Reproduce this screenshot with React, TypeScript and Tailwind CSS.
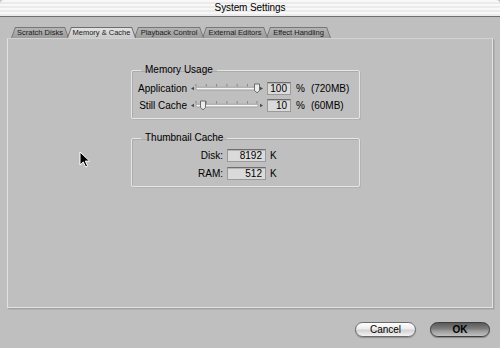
import React from 'react'

const tabs = [
  { label: 'Scratch Disks', w: 'w-[58px]', z: 'z-[1]', active: false },
  { label: 'Memory & Cache', w: 'w-[69px]', z: 'z-[9]', active: true },
  { label: 'Playback Control', w: 'w-[70px]', z: 'z-[5]', active: false },
  { label: 'External Editors', w: 'w-[66px]', z: 'z-[4]', active: false },
  { label: 'Effect Handling', w: 'w-[65px]', z: 'z-[3]', active: false },
]

const ticks = [5, 15.3, 25.6, 35.9, 46.2, 56.5, 66]

function Slider({ pos }: { pos: number }) {
  return (
    <svg width="73" height="13" viewBox="0 0 73 13" className="shrink-0">
      <polygon points="0,6.5 3,4.8 3,8.2" fill="#4a4a4a" />
      {ticks.map((x) => (
        <line key={x} x1={x} y1="2" x2={x} y2="4.6" stroke="#7a7a7a" strokeWidth="0.8" />
      ))}
      <rect x="5" y="5.3" width="62" height="2.6" rx="1.3" fill="#f6f6f6" stroke="#8a8a8a" strokeWidth="0.7" />
      <polygon points="72,6.5 69,4.8 69,8.2" fill="#4a4a4a" />
      <polygon
        points={`${pos - 2.5},2 ${pos + 2.5},2 ${pos + 2.5},8.5 ${pos},10.8 ${pos - 2.5},8.5`}
        fill="#ececec"
        stroke="#505050"
        strokeWidth="0.8"
      />
    </svg>
  )
}

function Field({ value, w }: { value: string; w: string }) {
  return (
    <div
      className={`${w} h-[13px] shrink-0 bg-[#dadada] border border-[#9a9a9a] border-t-[#6e6e6e] shadow-[inset_0_1px_0_#b4b4b4] text-right pr-[3px] text-[10px] leading-[11px] text-black`}
    >
      {value}
    </div>
  )
}

function Group({ title, children }: { title: string; children: React.ReactNode }) {
  return (
    <fieldset className="w-[229px] border border-[#e6e6e6] shadow-[inset_1px_1px_0_#ababab,1px_1px_0_#b3b3b3] rounded-[2px]">
      <legend className="ml-[9px] px-[4px] text-[10px] leading-[12px] text-black">{title}</legend>
      {children}
    </fieldset>
  )
}

export default function App() {
  return (
    <div className="relative w-[500px] h-[348px] overflow-hidden bg-[#bfbfbf] flex flex-col font-['Liberation_Sans',Arial,sans-serif] text-black">
      {/* Title bar */}
      <div className="h-[17px] shrink-0 border-b border-[#6f6f6f] rounded-t-[4px] bg-[repeating-linear-gradient(to_bottom,#f8f8f8_0px,#f8f8f8_2px,#ebebeb_2px,#ebebeb_4px)] flex items-center justify-center">
        <span className="text-[10px] leading-[16px] tracking-[-0.1px]">System Settings</span>
      </div>

      {/* Tabs */}
      <div className="mt-[10px] h-[11px] shrink-0 flex pl-[11px]">
        {tabs.map((t, i) => (
          <div
            key={t.label}
            className={`relative ${t.w} ${t.z} h-[11px] ${i > 0 ? '-ml-[2px]' : ''} ${
              t.active ? 'bg-[#6c6c6c]' : 'bg-[#777777]'
            } [clip-path:polygon(4px_0,calc(100%-4px)_0,100%_100%,0_100%)]`}
          >
            <div
              className={`absolute inset-x-[1px] top-[1px] bottom-0 ${
                t.active
                  ? 'bg-[linear-gradient(to_bottom,#e2e2e2,#c9c9c9)]'
                  : 'bg-[linear-gradient(to_bottom,#b4b4b4,#9c9c9c)]'
              } [clip-path:polygon(3.6px_0,calc(100%-3.6px)_0,100%_100%,0_100%)] flex items-center justify-center`}
            >
              <span className="text-[7.5px] leading-[10px] whitespace-nowrap text-[#1a1a1a]">{t.label}</span>
            </div>
          </div>
        ))}
      </div>

      {/* Pane */}
      <div className="mx-[7px] h-[270px] shrink-0 border border-[#e2e2e2] border-t-[#d2d2d2] shadow-[1px_1px_0_#a2a2a2,2px_2px_0_#b2b2b2] pt-[25px] pl-[123px] flex flex-col">
        <Group title="Memory Usage">
          <div className="pt-[6px] pb-[6px] flex flex-col gap-[4px]">
            <div className="flex items-center h-[13px]">
              <span className="w-[55px] text-right text-[10px] leading-[13px]">Application</span>
              <span className="ml-[4px]">
                <Slider pos={66} />
              </span>
              <span className="ml-[3px]">
                <Field value="100" w="w-[24px]" />
              </span>
              <span className="ml-[5px] text-[10px] leading-[13px]">%</span>
              <span className="ml-[6px] text-[10px] leading-[13px]">(720MB)</span>
            </div>
            <div className="flex items-center h-[13px]">
              <span className="w-[55px] text-right text-[10px] leading-[13px]">Still Cache</span>
              <span className="ml-[4px]">
                <Slider pos={12} />
              </span>
              <span className="ml-[3px]">
                <Field value="10" w="w-[24px]" />
              </span>
              <span className="ml-[5px] text-[10px] leading-[13px]">%</span>
              <span className="ml-[6px] text-[10px] leading-[13px]">(60MB)</span>
            </div>
          </div>
        </Group>

        <div className="mt-[13px]">
          <Group title="Thumbnail Cache">
            <div className="pt-[5px] pb-[6px] flex flex-col gap-[5px]">
              <div className="flex items-center h-[13px]">
                <span className="w-[91px] text-right text-[10px] leading-[13px]">Disk:</span>
                <span className="ml-[4px]">
                  <Field value="8192" w="w-[39px]" />
                </span>
                <span className="ml-[4px] text-[10px] leading-[13px]">K</span>
              </div>
              <div className="flex items-center h-[13px]">
                <span className="w-[91px] text-right text-[10px] leading-[13px]">RAM:</span>
                <span className="ml-[4px]">
                  <Field value="512" w="w-[39px]" />
                </span>
                <span className="ml-[4px] text-[10px] leading-[13px]">K</span>
              </div>
            </div>
          </Group>
        </div>
      </div>

      {/* Buttons */}
      <div className="mt-[14px] h-[15px] shrink-0 flex justify-end gap-[14px] pr-[10px]">
        <button className="w-[61px] h-[15px] rounded-full border border-[#6a6a6a] bg-[linear-gradient(to_bottom,#ffffff_0%,#ececec_45%,#d2d2d2_55%,#f4f4f4_100%)] shadow-[0_1px_1px_rgba(0,0,0,0.25)] text-[10px] leading-[13px] text-black">
          Cancel
        </button>
        <button className="w-[60px] h-[15px] rounded-full border border-[#3e3e3e] bg-[linear-gradient(to_bottom,#5a5a5a_0%,#7e7e7e_45%,#9a9a9a_60%,#c2c2c2_100%)] shadow-[0_1px_1px_rgba(0,0,0,0.3)] text-[10px] leading-[13px] font-bold text-black">
          OK
        </button>
      </div>

      {/* Mouse cursor */}
      <svg width="13" height="18" viewBox="0 0 13 18" className="absolute left-[79px] top-[151px]">
        <path d="M1 1 L1 14 L4.3 10.9 L6.6 16 L8.6 15.1 L6.3 10.1 L10.6 10.1 Z" fill="#000" stroke="#fff" strokeWidth="1" strokeLinejoin="round" />
      </svg>
    </div>
  )
}
